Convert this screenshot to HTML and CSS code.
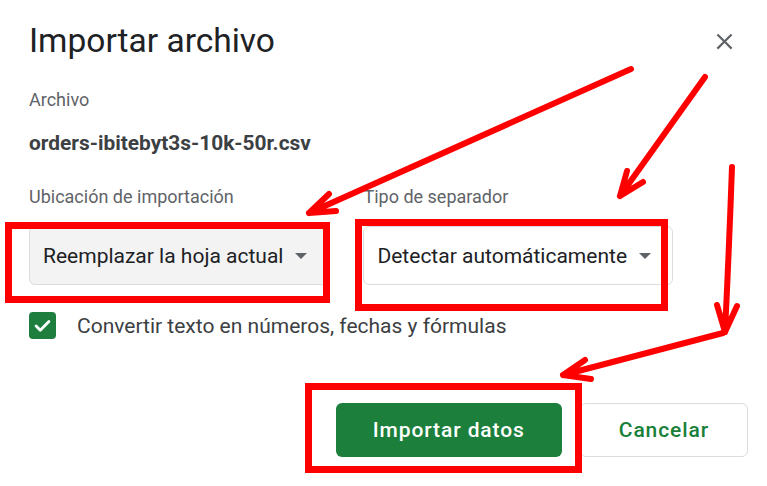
FILE: index.html
```html
<!DOCTYPE html>
<html>
    <head>
        <meta charset='UTF-8'>
        <link rel="stylesheet" href="styles.css">
    </head>
    <body>
        <div class="dialog">
            <header class="head">
                <h1 class="title">Importar archivo</h1>
                <button class="close" aria-label="Cerrar">
                    <svg width="27" height="27" viewBox="0 0 24 24"><path d="M19 6.41L17.59 5 12 10.59 6.41 5 5 6.41 10.59 12 5 17.59 6.41 19 12 13.41 17.59 19 19 17.59 13.41 12z"/></svg>
                </button>
            </header>

            <div class="label">Archivo</div>
            <div class="file">orders-ibitebyt3s-10k-50r.csv</div>

            <div class="fields">
                <div class="field">
                    <div class="label">Ubicación de importación</div>
                    <div class="select filled">
                        <span>Reemplazar la hoja actual</span>
                        <i class="caret"></i>
                    </div>
                </div>
                <div class="field">
                    <div class="label">Tipo de separador</div>
                    <div class="select">
                        <span>Detectar automáticamente</span>
                        <i class="caret"></i>
                    </div>
                </div>
            </div>

            <label class="check">
                <span class="box">
                    <svg width="18" height="18" viewBox="0 0 18 18"><path d="M3.5 9.5l3.6 3.6 7.4-7.6" fill="none" stroke="#fff" stroke-width="2.4" stroke-linecap="round" stroke-linejoin="round"/></svg>
                </span>
                Convertir texto en números, fechas y fórmulas
            </label>

            <div class="actions">
                <button class="btn primary">Importar datos</button>
                <button class="btn secondary">Cancelar</button>
            </div>
        </div>

        <!-- hand drawn red marks on top of the dialog -->
        <svg class="marks" width="767" height="486" viewBox="0 0 767 486">
            <g fill="none" stroke="#ff0000" stroke-width="7">
                <rect x="8.5" y="225.5" width="318" height="74"/>
                <rect x="358.5" y="222.5" width="306" height="85"/>
                <rect x="308.5" y="386.5" width="270" height="83"/>
            </g>
            <g fill="none" stroke="#ff0000" stroke-width="6" stroke-linecap="round" stroke-linejoin="round">
                <path d="M631 69 L309 213 M309 213 L329 194 M309 213 L336 211"/>
                <path d="M705 77 L620 196 M620 196 L627 171 M620 196 L643 182"/>
                <path d="M732 167 Q729 250 725 332 M725 332 L717 305 M725 332 L737 306"/>
                <path d="M723 333 L563 375 M563 375 L585 360 M563 375 L591 379"/>
            </g>
        </svg>
    </body>
</html>
```

FILE: styles.css
```css
html, body {
    width: 100%;
    height: 100%;
}

body {
    position: relative;
    margin: 0;
    padding: 0;
    background: #fff;
    font-family: Roboto, 'Liberation Sans', sans-serif;
    color: #3c4043;
    overflow: hidden;
}

.dialog {
    padding: 21px 19px 0 29px;
}

.head {
    display: flex;
    align-items: center;
    justify-content: space-between;
}

.title {
    margin: 0;
    font-size: 33.5px;
    line-height: 40px;
    font-weight: 400;
    color: #202124;
}

.close {
    display: flex;
    margin-right: 10px;
    padding: 0;
    border: 0;
    background: none;
    fill: #5f6368;
}

.label {
    font-size: 18px;
    line-height: 24px;
    color: #5f6368;
}

.dialog > .label {
    margin-top: 27px;
}

.file {
    margin-top: 17px;
    font-size: 20.9px;
    line-height: 28px;
    font-weight: 700;
    color: #3c4043;
}

.fields {
    display: flex;
    gap: 34px;
    margin-top: 28px;
}

.field .label {
    margin-bottom: 17px;
}

.select {
    display: inline-flex;
    align-items: center;
    gap: 12px;
    box-sizing: border-box;
    height: 59px;
    padding: 0 21px 0 13px;
    border: 1px solid #dadce0;
    border-radius: 6px;
    font-size: 21px;
    line-height: 24px;
    color: #202124;
    background: #fff;
}

.select.filled {
    background: #f3f3f3;
}

.caret {
    width: 0;
    height: 0;
    border-left: 6.5px solid transparent;
    border-right: 6.5px solid transparent;
    border-top: 6.5px solid #5f6368;
}

.check {
    display: flex;
    align-items: center;
    gap: 21px;
    margin-top: 27px;
    font-size: 21px;
    line-height: 24px;
    color: #3c4043;
}

.box {
    display: flex;
    align-items: center;
    justify-content: center;
    width: 27px;
    height: 27px;
    border-radius: 4px;
    background: #1e7e3e;
}

.box svg {
    width: 21px;
    height: 21px;
}

.actions {
    display: flex;
    justify-content: flex-end;
    gap: 18px;
    margin-top: 64px;
}

.btn {
    height: 54px;
    padding: 0 37px;
    border-radius: 6px;
    font-family: Roboto, 'Liberation Sans', sans-serif;
    font-size: 21px;
    font-weight: 500;
    letter-spacing: 0.9px;
}

.primary {
    border: 0;
    background: #1c7f3c;
    color: #fff;
}

.secondary {
    border: 1px solid #dadce0;
    background: #fff;
    color: #188038;
    padding: 0 38px;
}

.marks {
    position: absolute;
    top: 0;
    left: 0;
    pointer-events: none;
}
```
